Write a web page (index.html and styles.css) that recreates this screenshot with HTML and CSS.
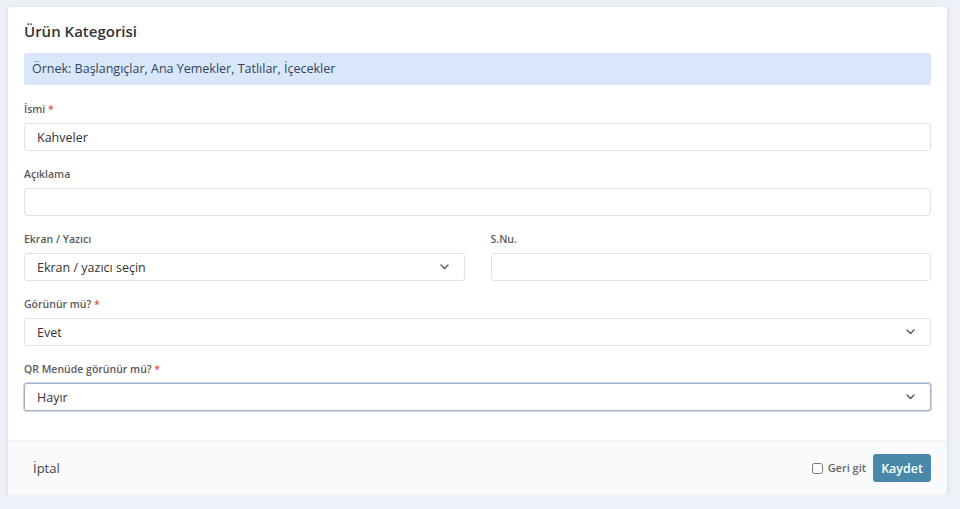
FILE: index.html
```html
<!DOCTYPE html>
<html lang="tr">
<head>
  <meta charset="UTF-8">
  <title>Ürün Kategorisi</title>
  <meta name="viewport" content="width=device-width, initial-scale=1.0">
  <link rel="stylesheet" href="styles.css">
</head>
<body>
  <div class="card">
    <div class="card-body">
      <h2>Ürün Kategorisi</h2>
      <div class="alert">Örnek: Başlangıçlar, Ana Yemekler, Tatlılar, İçecekler</div>
      <form id="categoryForm">
        <div class="form-group">
          <label for="name">İsmi <span class="req">*</span></label>
          <input id="name" type="text" value="Kahveler">
        </div>
        <div class="form-group">
          <label for="desc">Açıklama</label>
          <input id="desc" type="text">
        </div>
        <div class="form-row">
          <div class="form-group">
            <label for="printer">Ekran / Yazıcı</label>
            <div class="select">
              <span>Ekran / yazıcı seçin</span>
              <svg width="9" height="6" viewBox="0 0 9 6"><path d="M1 1l3.5 3.5L8 1" fill="none" stroke="#555" stroke-width="1.4" stroke-linecap="round" stroke-linejoin="round"/></svg>
            </div>
          </div>
          <div class="form-group">
            <label for="order">S.Nu.</label>
            <input id="order" type="text">
          </div>
        </div>
        <div class="form-group">
          <label>Görünür mü? <span class="req">*</span></label>
          <div class="select">
            <span>Evet</span>
            <svg width="9" height="6" viewBox="0 0 9 6"><path d="M1 1l3.5 3.5L8 1" fill="none" stroke="#555" stroke-width="1.4" stroke-linecap="round" stroke-linejoin="round"/></svg>
          </div>
        </div>
        <div class="form-group">
          <label>QR Menüde görünür mü? <span class="req">*</span></label>
          <div class="select focused">
            <span>Hayır</span>
            <svg width="9" height="6" viewBox="0 0 9 6"><path d="M1 1l3.5 3.5L8 1" fill="none" stroke="#555" stroke-width="1.4" stroke-linecap="round" stroke-linejoin="round"/></svg>
          </div>
        </div>
      </form>
    </div>
    <div class="card-footer">
      <a class="cancel" href="#">İptal</a>
      <div class="actions">
        <label class="check"><input type="checkbox"> Geri git</label>
        <button type="submit" form="categoryForm">Kaydet</button>
      </div>
    </div>
  </div>
</body>
</html>
```

FILE: styles.css
```css
body {
  font-family: "Open Sans", "Noto Sans", Arial, sans-serif;
  background-color: #edf1f7;
  margin: 0;
  padding: 7px 13px 0 8px;
  color: #333;
}
.card {
  background: #fff;
  border-radius: 3px;
  box-shadow: 0 1px 4px rgba(0, 0, 0, 0.12);
}
.card-body {
  padding: 14px 16px 29px 16px;
}
h2 {
  margin: 0 0 12px;
  font-size: 15px;
  font-weight: 600;
  line-height: 20px;
  color: #333;
}
.alert {
  background: #d9e7fb;
  color: #2f4560;
  font-size: 12.5px;
  line-height: 32px;
  padding: 0 8px;
  border-radius: 2px;
  margin-bottom: 17px;
}
.form-group {
  margin-bottom: 16px;
  flex: 1;
}
.form-group:last-child {
  margin-bottom: 0;
}
.form-row {
  display: flex;
  gap: 26px;
}
label {
  display: block;
  font-size: 10.5px;
  font-weight: 600;
  color: #5a5a5a;
  line-height: 14px;
  margin-bottom: 7px;
}
.req {
  color: #d9534f;
}
input[type="text"], .select {
  display: block;
  width: 100%;
  height: 28px;
  box-sizing: border-box;
  border: 1px solid #dfe3e8;
  border-radius: 3px;
  padding: 0 12px;
  font-family: inherit;
  font-size: 12.5px;
  color: #333;
  background: #fff;
}
.select {
  display: flex;
  justify-content: space-between;
  align-items: center;
  padding-right: 15px;
}
.select.focused {
  border: 1px solid #9fb4c9;
  box-shadow: 0 0 0 1px #c9d6e3;
}
.card-footer {
  background: #f8fafc;
  border-top: 1px solid #edf0f4;
  height: 54px;
  display: flex;
  justify-content: space-between;
  align-items: center;
  padding: 0 16px 0 25px;
  border-radius: 0 0 3px 3px;
}
.cancel {
  font-size: 13px;
  color: #444;
  text-decoration: none;
}
.actions {
  display: flex;
  align-items: center;
  gap: 7px;
}
.check {
  display: flex;
  align-items: center;
  gap: 3px;
  margin: 0;
  font-size: 11px;
  font-weight: 600;
  color: #666;
}
.check input {
  width: 11px;
  height: 11px;
  margin: 0 2px 0 0;
}
button {
  background-color: #4888a8;
  color: #fff;
  border: none;
  border-radius: 3px;
  height: 28px;
  padding: 0 8px;
  font-family: inherit;
  font-size: 12.5px;
  font-weight: 600;
  cursor: pointer;
}
```
